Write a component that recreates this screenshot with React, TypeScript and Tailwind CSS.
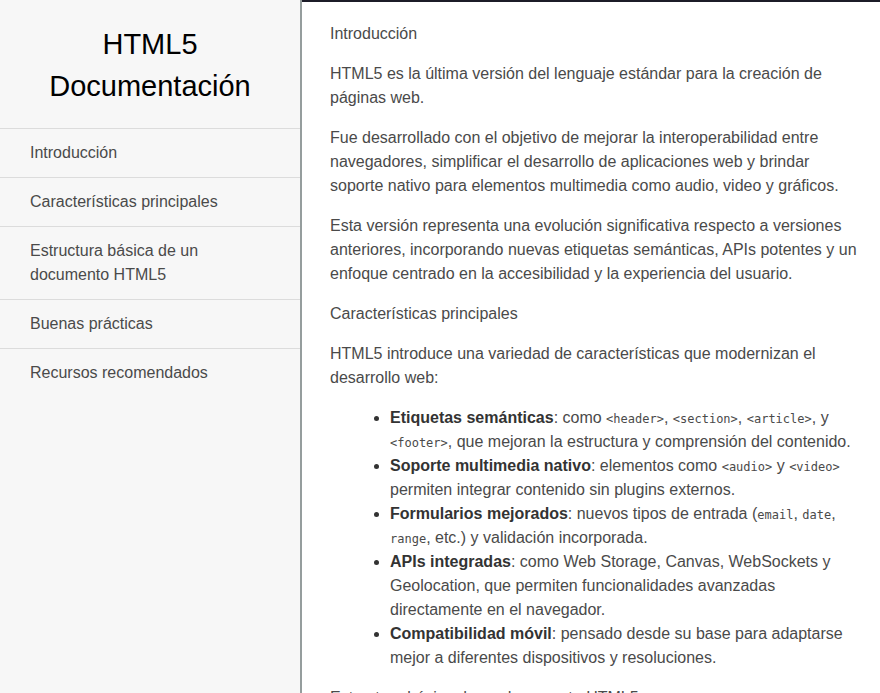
const navItems = [
  'Introducción',
  'Características principales',
  'Estructura básica de un documento HTML5',
  'Buenas prácticas',
  'Recursos recomendados',
]

function Code({ children }: { children: React.ReactNode }) {
  return <code className="font-['DejaVu_Sans_Mono',monospace] text-[12px] leading-none text-[#4a4a4a]">{children}</code>
}

export default function App() {
  return (
    <div className="flex h-[693px] overflow-hidden bg-white font-['Liberation_Sans',Arial,sans-serif] text-[16px] leading-6 text-[#4a4a4a]">
      {/* sidebar */}
      <nav className="w-[302px] shrink-0 border-r-2 border-[#959d9d] bg-[#f7f7f7]">
        <header className="px-5 pt-[23px] pb-[21px] text-center text-[29px] leading-[42px] text-black">
          HTML5 Documentación
        </header>
        <ul>
          {navItems.map((item) => (
            <li key={item} className="border-t border-[#dcdcdc] py-3 pl-[30px] pr-12">
              {item}
            </li>
          ))}
        </ul>
      </nav>

      {/* main content */}
      <main className="flex-1 border-t-2 border-[#1c1c28] pt-5 pl-7 pr-5">
        <section>
          <header className="mb-4">Introducción</header>
          <p className="mb-4">HTML5 es la última versión del lenguaje estándar para la creación de páginas web.</p>
          <p className="mb-4">
            Fue desarrollado con el objetivo de mejorar la interoperabilidad entre navegadores, simplificar el
            desarrollo de aplicaciones web y brindar soporte nativo para elementos multimedia como audio, video y
            gráficos.
          </p>
          <p className="mb-4">
            Esta versión representa una evolución significativa respecto a versiones anteriores, incorporando nuevas
            etiquetas semánticas, APIs potentes y un enfoque centrado en la accesibilidad y la experiencia del usuario.
          </p>
        </section>
        <section>
          <header className="mb-4">Características principales</header>
          <p className="mb-4">HTML5 introduce una variedad de características que modernizan el desarrollo web:</p>
          <ul className="mb-4 list-disc pl-[60px] marker:text-[#333]">
            <li>
              <strong className="text-[#333]">Etiquetas semánticas</strong>: como <Code>&lt;header&gt;</Code>,{' '}
              <Code>&lt;section&gt;</Code>, <Code>&lt;article&gt;</Code>, y <Code>&lt;footer&gt;</Code>, que mejoran
              la estructura y comprensión del contenido.
            </li>
            <li>
              <strong className="text-[#333]">Soporte multimedia nativo</strong>: elementos como{' '}
              <Code>&lt;audio&gt;</Code> y <Code>&lt;video&gt;</Code> permiten integrar contenido sin plugins
              externos.
            </li>
            <li>
              <strong className="text-[#333]">Formularios mejorados</strong>: nuevos tipos de entrada (
              <Code>email</Code>, <Code>date</Code>, <Code>range</Code>, etc.) y validación incorporada.
            </li>
            <li>
              <strong className="text-[#333]">APIs integradas</strong>: como Web Storage, Canvas, WebSockets y
              Geolocation, que permiten funcionalidades avanzadas directamente en el navegador.
            </li>
            <li>
              <strong className="text-[#333]">Compatibilidad móvil</strong>: pensado desde su base para adaptarse
              mejor a diferentes dispositivos y resoluciones.
            </li>
          </ul>
        </section>
        <section>
          <header className="mb-4">Estructura básica de un documento HTML5</header>
        </section>
      </main>
    </div>
  )
}
